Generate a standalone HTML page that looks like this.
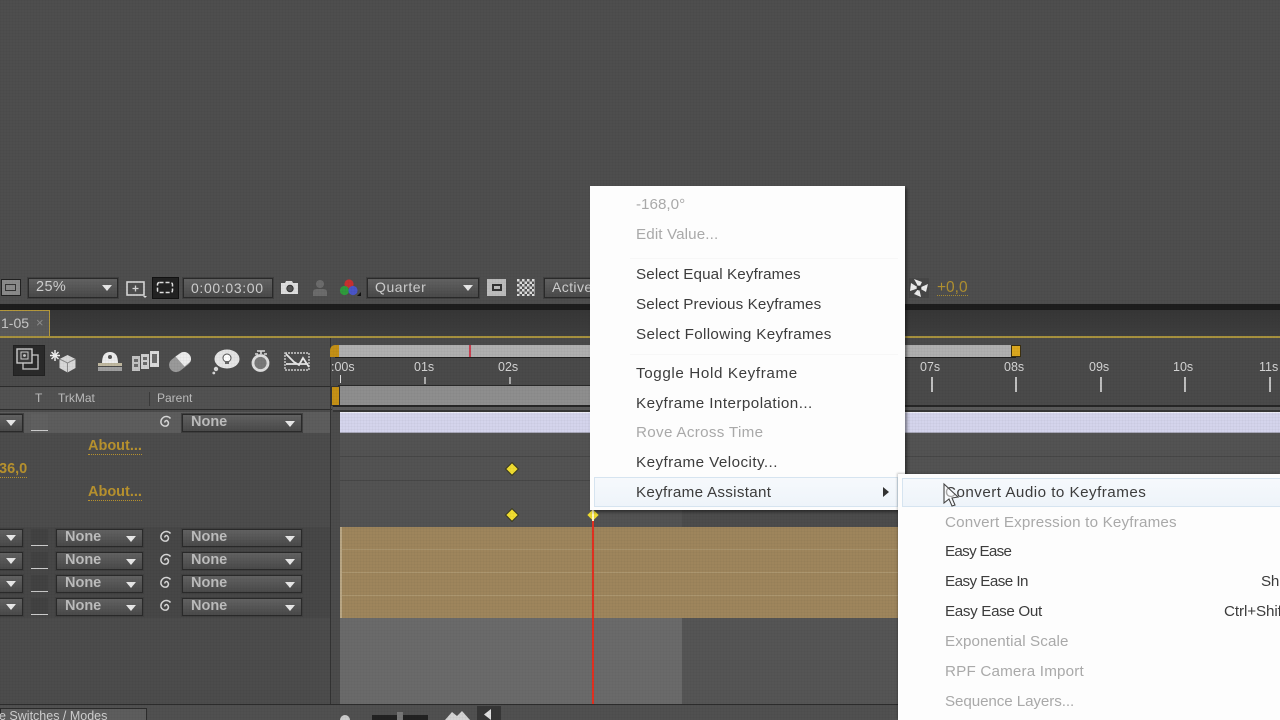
<!DOCTYPE html>
<html><head><meta charset="utf-8"><style>
html,body{margin:0;padding:0;width:1280px;height:720px;overflow:hidden;background:#4e4e4e;font-family:"Liberation Sans",sans-serif}
#r{position:relative;width:1280px;height:720px;overflow:hidden}
#r div{position:absolute}
.t{white-space:nowrap;color:#c4c4c4;font-size:13px;line-height:16px}
.dd{background:linear-gradient(#626262,#4a4a4a);border:1px solid #2a2a2a;box-sizing:border-box;box-shadow:0 0 0 1px #404040}
.ar{width:0;height:0;border-left:5px solid transparent;border-right:5px solid transparent;border-top:6px solid #e8e8e8}
.n{font-size:14.5px;font-weight:700;color:#bdbdbd}
.m{white-space:nowrap;color:#3c3c3c;font-size:15.2px;line-height:20px;letter-spacing:.12px}
.g{color:#a9a9a9}
.grid{position:absolute;left:0;top:0;width:1280px;height:720px;pointer-events:none;background-image:linear-gradient(rgba(0,0,0,.022) 1px,transparent 1px),linear-gradient(90deg,rgba(0,0,0,.022) 1px,transparent 1px);background-size:3px 3px}
.k{width:8px;height:8px;background:#f0dc30;transform:rotate(45deg);box-shadow:0 0 0 1px #3a3a20}
.tick{width:2px;height:15px;background:#c0c0c0;top:377px}
.rl{color:#d4d4d4;font-size:12.5px;top:359px}
.ab{font-size:14.5px;font-weight:700;color:#b8922e;border-bottom:1px dotted #b8922e;line-height:16px}
.chk{left:31px;width:17px;height:17px;background:#424242;border-bottom:1px solid #ccc;box-sizing:border-box}
.sp{position:absolute;left:157px}
</style></head><body><div id="r">

<!-- toolbar -->
<div style="left:0;top:273px;width:1280px;height:31px;background:#4e4e4e"></div>
<div style="left:0;top:304px;width:1280px;height:6px;background:#1d1d1d"></div>
<div style="left:0;top:310px;width:1280px;height:26px;background:linear-gradient(#363636,#3e3e3e)"></div>
<div style="left:0;top:310px;width:50px;height:26px;background:#5a5a5a;border-right:1px solid #b4983c;border-top:1px solid #b4983c;box-sizing:border-box"></div>
<div style="left:0;top:336px;width:1280px;height:2px;background:#a8923e"></div>
<div class="t" style="left:1px;top:315px;font-size:14px;color:#c8c8c8">1-05</div>
<div class="t" style="left:36px;top:315px;font-size:13px;color:#8c8c8c">×</div>

<div style="left:1px;top:279px;width:20px;height:17px;background:#8a8a8a;border:1px solid #222;box-sizing:border-box"></div>
<div style="left:5px;top:284px;width:11px;height:7px;border:1px solid #333;box-sizing:border-box"></div>
<div class="dd" style="left:28px;top:278px;width:90px;height:20px"></div>
<div class="t" style="left:36px;top:279px;font-size:14.5px;letter-spacing:.4px;color:#d0d0d0">25%</div>
<div class="ar" style="left:102px;top:285px"></div>
<svg style="position:absolute;left:125px;top:279px" width="24" height="20"><rect x="2" y="3" width="17" height="13" fill="none" stroke="#d8d8d8" stroke-width="1.6"/><path d="M10.500 6.500v6M7.500 9.500h6" stroke="#d8d8d8" stroke-width="1.300"/><path d="M18 17h4l-2 2z" fill="#ddd"/></svg>
<div style="left:152px;top:277px;width:27px;height:22px;background:#222;border:1px solid #111;box-sizing:border-box"></div>
<svg style="position:absolute;left:156px;top:281px" width="20" height="14"><rect x="1.500" y="1.500" width="15" height="10" rx="2" fill="none" stroke="#e0e0e0" stroke-width="1.500" stroke-dasharray="4 2"/></svg>
<div class="dd" style="left:183px;top:278px;width:90px;height:20px"></div>
<div class="t" style="left:191px;top:280px;font-size:14px;letter-spacing:.65px;color:#cfcfcf">0:00:03:00</div>
<svg style="position:absolute;left:280px;top:280px" width="20" height="16"><path d="M1 3h4l1-2h6l1 2h5v11H1z" fill="#dedede"/><circle cx="10" cy="8.500" r="3.200" fill="#555" stroke="#333"/></svg>
<svg style="position:absolute;left:311px;top:279px" width="18" height="18"><circle cx="9" cy="5" r="4" fill="#6c6c6c"/><path d="M2 17v-4q0-3 4-3h6q4 0 4 3v4z" fill="#6c6c6c"/></svg>
<svg style="position:absolute;left:338px;top:278px" width="24" height="20"><circle cx="11" cy="6" r="4.600" fill="#c83030"/><circle cx="6.500" cy="12.500" r="4.600" fill="#2f9a3c"/><circle cx="15" cy="12.500" r="4.600" fill="#4a55c8"/><path d="M19 18h4v-4z" fill="#111"/></svg>
<div class="dd" style="left:367px;top:278px;width:112px;height:20px"></div>
<div class="t" style="left:375px;top:279px;font-size:14px;letter-spacing:.55px;color:#cfcfcf">Quarter</div>
<div class="ar" style="left:463px;top:285px"></div>
<div style="left:487px;top:279px;width:19px;height:17px;background:#bdbdbd;box-sizing:border-box"></div>
<div style="left:492px;top:284px;width:10px;height:7px;border:2px solid #333;box-sizing:border-box"></div>
<div style="left:517px;top:279px;width:18px;height:17px;background:repeating-conic-gradient(#555 0 25%,#ddd 0 50%) 0 0/5px 5px"></div>
<div class="dd" style="left:544px;top:278px;width:60px;height:20px"></div>
<div class="t" style="left:552px;top:279px;font-size:14px;letter-spacing:.4px;color:#cfcfcf">Active</div>
<svg style="position:absolute;left:908px;top:278px" width="22" height="20"><rect x="1" y="0" width="20" height="20" fill="#474747"/><path d="M11 10L6 1l8 3zM11 10l9-4-2 8zM11 10l2 9-7-3zM11 10L2 13l1-8z" fill="#ececec"/><circle cx="11" cy="10" r="2.400" fill="#3a3a3a"/></svg>
<div class="t" style="left:937px;top:280px;font-size:15.500px;color:#b09030;border-bottom:1px dotted #a58a30;line-height:15px">+0,0</div>

<!-- panel -->
<div style="left:0;top:338px;width:1280px;height:48px;background:#4c4c4c"></div>
<div style="left:0;top:386px;width:332px;height:24px;background:#525252;border-top:1px solid #2c2c2c;border-bottom:1px solid #2c2c2c;box-sizing:border-box"></div>
<div style="left:0;top:410px;width:1280px;height:310px;background:#4c4c4c"></div>
<div style="left:330px;top:338px;width:1px;height:367px;background:#333"></div>
<div class="t" style="left:35px;top:390px;font-size:12px;color:#bcbcbc">T</div>
<div class="t" style="left:58px;top:390px;font-size:12px;color:#bcbcbc">TrkMat</div>
<div style="left:149px;top:392px;width:1px;height:14px;background:#3a3a3a"></div>
<div class="t" style="left:157px;top:390px;font-size:12px;color:#bcbcbc">Parent</div>

<!-- icons row -->
<div style="left:13px;top:345px;width:32px;height:31px;background:#2a2a2a;box-sizing:border-box;border:1px solid #222"></div>
<svg style="position:absolute;left:15px;top:347px" width="26" height="26"><rect x="8" y="8" width="15" height="14" fill="none" stroke="#bbb" stroke-width="1.400"/><rect x="2" y="2" width="15" height="14" fill="#3a3a3a" stroke="#ccc" stroke-width="1.400"/><rect x="6" y="5" width="7" height="7" fill="none" stroke="#ccc"/><circle cx="9.500" cy="8.500" r="1.400" fill="#ccc"/></svg>
<svg style="position:absolute;left:49px;top:348px" width="28" height="26"><path d="M6 2v11M1 7.500h10M2.500 4l7 7M9.500 4l-7 7" stroke="#f0f0f0" stroke-width="1.500"/><path d="M18.500 7l8 4v9l-8 4.500-8-4.500v-9z" fill="#d8d8d8"/><path d="M10.500 11l8 4 8-4M18.500 15v9.500" stroke="#8a8a8a" fill="none"/></svg>
<svg style="position:absolute;left:97px;top:350px" width="26" height="24"><path d="M5 13q0-11 8-11t8 11z" fill="#ededed"/><circle cx="13" cy="7" r="2" fill="#555"/><path d="M1 13h24v3H1z" fill="#c0b8a0"/><path d="M1 17h24v4H1z" fill="#a0a0a0"/></svg>
<svg style="position:absolute;left:132px;top:350px" width="28" height="22"><path d="M0 6h8v15H0z" fill="#c4c4c4"/><path d="M9 4h8v15H9z" fill="#d0d0d0"/><path d="M18 1h9v16h-9z" fill="#dcdcdc"/><path d="M2 9h4v3H2zM2 14h4v3H2zM11 7h4v3h-4zM11 12h4v3h-4zM20 4h5v9h-5z" fill="#6a6a6a"/></svg>
<svg style="position:absolute;left:167px;top:349px" width="26" height="26"><rect x="1" y="6" width="24" height="14" rx="7" transform="rotate(-38 13 13)" fill="#9a9a9a"/><path d="M14.500 3.500a7 7 0 0 1 9 9l-6 5-9-10z" fill="#ececec"/></svg>
<svg style="position:absolute;left:212px;top:349px" width="28" height="26"><ellipse cx="15" cy="10" rx="12.500" ry="9.500" fill="#e4e4e4"/><circle cx="15" cy="9" r="4" fill="#fff" stroke="#555"/><rect x="13" y="12" width="4" height="3" fill="#666"/><circle cx="4" cy="20" r="2.200" fill="#d8d8d8"/><circle cx="1.800" cy="24" r="1.400" fill="#d8d8d8"/></svg>
<svg style="position:absolute;left:250px;top:350px" width="22" height="24"><path d="M7 1h8M11 1v3M5 4h3M14 4h3" stroke="#ddd" stroke-width="1.600"/><circle cx="10.500" cy="13" r="7.500" fill="#797979" stroke="#dedede" stroke-width="2.800"/></svg>
<svg style="position:absolute;left:283px;top:351px" width="28" height="22"><rect x="2" y="2" width="24" height="17" fill="none" stroke="#cfcfcf" stroke-width="1.400" stroke-dasharray="2 1"/><path d="M3 3l8 8 5 3 4-7 6 9M3 13h22" fill="none" stroke="#e8e8e8" stroke-width="1.800"/></svg>

<!-- timeline ruler -->
<div style="left:333px;top:338px;width:947px;height:67px;background:#4a4a4a"></div>
<div style="left:335px;top:345px;width:681px;height:12px;background:#b0b0b0;box-shadow:0 1px 0 #222"></div>
<div style="left:469px;top:345px;width:2px;height:12px;background:#c84050"></div>
<div style="left:330px;top:345px;width:9px;height:12px;background:#c49016;border-radius:5px 0 0 0"></div>
<div style="left:1011px;top:345px;width:10px;height:12px;background:#dca81e;border:1px solid #3c3010;box-sizing:border-box"></div>
<div class="t rl" style="left:331px;overflow:hidden;width:30px">:00s</div>
<div style="left:340px;top:375px;width:1px;height:8px;background:#ddd"></div>
<div class="t rl" style="left:414px">01s</div><div style="left:424px;top:377px;width:2px;height:7px;background:#aaa"></div>
<div class="t rl" style="left:498px">02s</div><div style="left:509px;top:377px;width:2px;height:7px;background:#aaa"></div>
<div class="t rl" style="left:920px">07s</div><div class="tick" style="left:931px"></div>
<div class="t rl" style="left:1004px">08s</div><div class="tick" style="left:1015px"></div>
<div class="t rl" style="left:1089px">09s</div><div class="tick" style="left:1100px"></div>
<div class="t rl" style="left:1173px">10s</div><div class="tick" style="left:1184px"></div>
<div class="t rl" style="left:1259px">11s</div><div class="tick" style="left:1269px"></div>
<div style="left:338px;top:385px;width:344px;height:20px;background:#8e8e8e;border-top:1px solid #292929;box-sizing:border-box"></div>
<div style="left:331px;top:386px;width:9px;height:20px;background:#c49016;border:1px solid #333;box-sizing:border-box"></div>
<div style="left:333px;top:405px;width:947px;height:2px;background:#262626"></div>
<div style="left:333px;top:407px;width:947px;height:3px;background:#5a5a5a"></div>
<div style="left:333px;top:410px;width:947px;height:2px;background:#363636"></div>

<!-- layer row 1 -->
<div style="left:0;top:412px;width:330px;height:21px;background:#5d5d5d"></div>
<div style="left:340px;top:412px;width:940px;height:21px;background:#d4d4ec;border-top:1px solid #ececf6;border-bottom:1px solid #aaaabb;box-sizing:border-box"></div>
<div class="dd" style="left:-10px;top:414px;width:33px;height:18px"></div><div class="ar" style="left:6px;top:420px"></div>
<div style="left:31px;top:414px;width:17px;height:17px;background:#606060;border-bottom:1px solid #ccc;box-sizing:border-box"></div>
<div style="left:182px;top:414px;width:120px;height:18px" class="dd"></div>
<div class="t n" style="left:191px;top:414px">None</div>
<div class="ar" style="left:285px;top:421px"></div>
<svg class="sp" style="top:414px" width="16" height="16"><path d="M8 8.500a1.500 1.500 0 0 1 2.500-1.500a3 3 0 0 1-1 5a4.500 4.500 0 0 1-5.500-3a5.500 5.500 0 0 1 5-6.500a5.500 5.500 0 0 1 4.500 2" fill="none" stroke="#d8d8d8" stroke-width="1.500"/></svg>

<!-- properties -->
<div style="left:340px;top:433px;width:940px;height:94px;background:#535353"></div>
<div style="left:340px;top:480px;width:940px;height:1px;background:#484848"></div>
<div style="left:682px;top:505px;width:216px;height:22px;background:#4c4c4c"></div>
<div style="left:340px;top:456px;width:940px;height:1px;background:#484848"></div>
<div class="t ab" style="left:88px;top:438px">About...</div>
<div class="t ab" style="left:-1px;top:461px">36,0</div>
<div class="t ab" style="left:88px;top:484px">About...</div>
<div class="k" style="left:508px;top:465px"></div>
<div class="k" style="left:508px;top:511px"></div>

<!-- layer rows -->
<div style="left:0;top:527px;width:330px;height:91px;background:#474747"></div>
<div style="left:340px;top:527px;width:558px;height:91px;background:#9e855c"></div>
<div style="left:340px;top:549px;width:558px;height:1px;background:#ab966f"></div>
<div style="left:340px;top:572px;width:558px;height:1px;background:#ab966f"></div>
<div style="left:340px;top:595px;width:558px;height:1px;background:#ab966f"></div>
<div style="left:340px;top:527px;width:2px;height:91px;background:#b8a684"></div>

<div class="dd" style="left:-10px;top:529px;width:33px;height:18px"></div><div class="ar" style="left:6px;top:535px"></div>
<div class="chk" style="top:529px"></div>
<div class="dd" style="left:56px;top:529px;width:87px;height:18px"></div><div class="t n" style="left:65px;top:529px">None</div><div class="ar" style="left:126px;top:536px"></div>
<svg class="sp" style="top:529px" width="16" height="16"><path d="M8 8.500a1.500 1.500 0 0 1 2.500-1.500a3 3 0 0 1-1 5a4.500 4.500 0 0 1-5.500-3a5.500 5.500 0 0 1 5-6.500a5.500 5.500 0 0 1 4.500 2" fill="none" stroke="#d8d8d8" stroke-width="1.500"/></svg>
<div class="dd" style="left:182px;top:529px;width:120px;height:18px"></div><div class="t n" style="left:191px;top:529px">None</div><div class="ar" style="left:285px;top:536px"></div>

<div class="dd" style="left:-10px;top:552px;width:33px;height:18px"></div><div class="ar" style="left:6px;top:558px"></div>
<div class="chk" style="top:552px"></div>
<div class="dd" style="left:56px;top:552px;width:87px;height:18px"></div><div class="t n" style="left:65px;top:552px">None</div><div class="ar" style="left:126px;top:559px"></div>
<svg class="sp" style="top:552px" width="16" height="16"><path d="M8 8.500a1.500 1.500 0 0 1 2.500-1.500a3 3 0 0 1-1 5a4.500 4.500 0 0 1-5.500-3a5.500 5.500 0 0 1 5-6.500a5.500 5.500 0 0 1 4.500 2" fill="none" stroke="#d8d8d8" stroke-width="1.500"/></svg>
<div class="dd" style="left:182px;top:552px;width:120px;height:18px"></div><div class="t n" style="left:191px;top:552px">None</div><div class="ar" style="left:285px;top:559px"></div>

<div class="dd" style="left:-10px;top:575px;width:33px;height:18px"></div><div class="ar" style="left:6px;top:581px"></div>
<div class="chk" style="top:575px"></div>
<div class="dd" style="left:56px;top:575px;width:87px;height:18px"></div><div class="t n" style="left:65px;top:575px">None</div><div class="ar" style="left:126px;top:582px"></div>
<svg class="sp" style="top:575px" width="16" height="16"><path d="M8 8.500a1.500 1.500 0 0 1 2.500-1.500a3 3 0 0 1-1 5a4.500 4.500 0 0 1-5.500-3a5.500 5.500 0 0 1 5-6.500a5.500 5.500 0 0 1 4.500 2" fill="none" stroke="#d8d8d8" stroke-width="1.500"/></svg>
<div class="dd" style="left:182px;top:575px;width:120px;height:18px"></div><div class="t n" style="left:191px;top:575px">None</div><div class="ar" style="left:285px;top:582px"></div>

<div class="dd" style="left:-10px;top:598px;width:33px;height:18px"></div><div class="ar" style="left:6px;top:604px"></div>
<div class="chk" style="top:598px"></div>
<div class="dd" style="left:56px;top:598px;width:87px;height:18px"></div><div class="t n" style="left:65px;top:598px">None</div><div class="ar" style="left:126px;top:605px"></div>
<svg class="sp" style="top:598px" width="16" height="16"><path d="M8 8.500a1.500 1.500 0 0 1 2.500-1.500a3 3 0 0 1-1 5a4.500 4.500 0 0 1-5.500-3a5.500 5.500 0 0 1 5-6.500a5.500 5.500 0 0 1 4.500 2" fill="none" stroke="#d8d8d8" stroke-width="1.500"/></svg>
<div class="dd" style="left:182px;top:598px;width:120px;height:18px"></div><div class="t n" style="left:191px;top:598px">None</div><div class="ar" style="left:285px;top:605px"></div>

<!-- lower tracks -->
<div style="left:340px;top:618px;width:342px;height:86px;background:#6a6a6a"></div>
<div style="left:682px;top:618px;width:216px;height:86px;background:#555"></div>
<div style="left:0;top:704px;width:1280px;height:1px;background:#2c2c2c"></div>
<div style="left:0;top:705px;width:1280px;height:15px;background:#505050"></div>
<div style="left:0;top:708px;width:147px;height:12px;background:#5d5d5d;border:1px solid #2c2c2c;border-bottom:0;box-sizing:border-box"></div>
<div class="t" style="left:-1px;top:708px;font-size:12.500px;color:#cfcfcf">e Switches / Modes</div>
<svg style="position:absolute;left:335px;top:712px" width="20" height="8"><circle cx="10" cy="8" r="5" fill="#ccc"/></svg>
<div style="left:372px;top:715px;width:56px;height:5px;background:#222"></div>
<div style="left:397px;top:712px;width:6px;height:8px;background:#777"></div>
<svg style="position:absolute;left:445px;top:710px" width="26" height="10"><path d="M0 10l7-8 5 4 5-5 8 9z" fill="#d4d4d4"/></svg>
<div style="left:477px;top:706px;width:24px;height:14px;background:#363636"></div>
<svg style="position:absolute;left:482px;top:709px" width="12" height="11"><path d="M9 0L2 5.500 9 11z" fill="#e0e0e0"/></svg>
<div style="left:592px;top:515px;width:2px;height:189px;background:#e03020"></div>
<div class="k" style="left:589px;top:511px;box-shadow:none"></div>
<div style="left:592px;top:509px;width:2px;height:12px;background:#fff6c0"></div>

<div class="grid"></div>

<!-- menu 1 -->
<div style="left:590px;top:186px;width:315px;height:324px;background:#fdfdfd;box-shadow:2px 2px 3px rgba(0,0,0,.45)"></div>
<div style="left:630px;top:258px;width:268px;height:1px;background:#f7f7f7"></div>
<div style="left:630px;top:354px;width:268px;height:1px;background:#f7f7f7"></div>
<div style="left:594px;top:477px;width:304px;height:30px;background:linear-gradient(#f6f9fc,#eef4fa);border:1px solid #d6e4f0;box-sizing:border-box"></div>
<div class="m g" style="left:636px;top:195px;letter-spacing:0">-168,0°</div>
<div class="m g" style="left:636px;top:225px">Edit Value...</div>
<div class="m" style="left:636px;top:265px">Select Equal Keyframes</div>
<div class="m" style="left:636px;top:295px">Select Previous Keyframes</div>
<div class="m" style="left:636px;top:325px;letter-spacing:.32px">Select Following Keyframes</div>
<div class="m" style="left:636px;top:364px;letter-spacing:.62px">Toggle Hold Keyframe</div>
<div class="m" style="left:636px;top:394px;letter-spacing:.45px">Keyframe Interpolation...</div>
<div class="m g" style="left:636px;top:423px;letter-spacing:.31px">Rove Across Time</div>
<div class="m" style="left:636px;top:453px;letter-spacing:.44px">Keyframe Velocity...</div>
<div class="m" style="left:636px;top:483px;letter-spacing:.29px">Keyframe Assistant</div>
<svg style="position:absolute;left:883px;top:487px" width="7" height="10"><path d="M0 0l6 5-6 5z" fill="#333"/></svg>

<!-- submenu -->
<div style="left:898px;top:474px;width:382px;height:246px;background:#fdfdfd;box-shadow:-1px -1px 2px rgba(0,0,0,.2)"></div>
<div style="left:902px;top:478px;width:378px;height:29px;background:linear-gradient(#f6f9fc,#eef4fa);border:1px solid #d6e4f0;border-right:0;box-sizing:border-box"></div>
<div class="m" style="left:945px;top:483px;letter-spacing:.47px">Convert Audio to Keyframes</div>
<div class="m g" style="left:945px;top:513px;letter-spacing:.18px">Convert Expression to Keyframes</div>
<div class="m" style="left:945px;top:542px;letter-spacing:-.7px">Easy Ease</div>
<div class="m" style="left:945px;top:572px;letter-spacing:-.55px">Easy Ease In</div>
<div class="m" style="left:945px;top:602px;letter-spacing:-.34px">Easy Ease Out</div>
<div class="m g" style="left:945px;top:632px">Exponential Scale</div>
<div class="m g" style="left:945px;top:662px;letter-spacing:.18px">RPF Camera Import</div>
<div class="m g" style="left:945px;top:692px;letter-spacing:-.1px">Sequence Layers...</div>
<div class="m" style="left:1261px;top:572px;letter-spacing:-.2px">Shift+F9</div>
<div class="m" style="left:1224px;top:602px;letter-spacing:-.1px">Ctrl+Shift+F9</div>
<svg style="position:absolute;left:942px;top:482px" width="18" height="28"><path d="M2 2v19l5-4 3 7 3-1-3-7 6-1z" fill="#fff" fill-opacity=".55" stroke="#444" stroke-width="1.100"/></svg>
</div></body></html>
